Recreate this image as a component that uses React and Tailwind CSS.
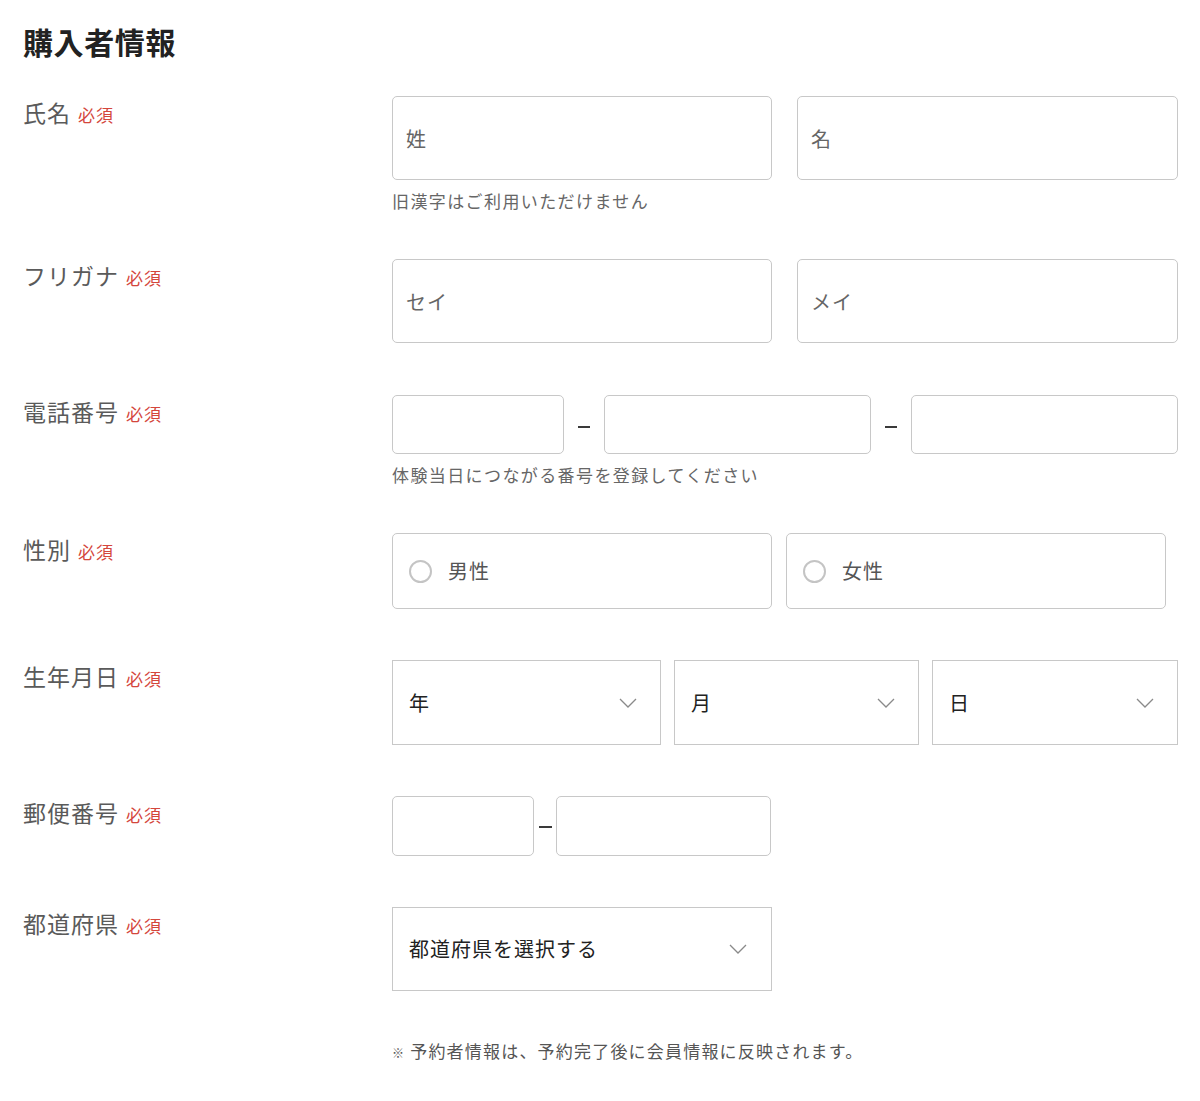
import React from "react";

function Required() {
  return (
    <span className="ml-[7px] text-[17px] tracking-[1px] text-[#d4463c]">必須</span>
  );
}

function Label({ children }) {
  return (
    <div className="w-[369px] shrink-0 leading-[32px]">
      <span className="text-[23px] tracking-[1px] text-[#5a5a5a]">{children}</span>
      <Required />
    </div>
  );
}

function TextInput({ placeholder, className }) {
  return (
    <input
      type="text"
      placeholder={placeholder}
      className={
        "border border-[#c8c8c8] rounded-[5px] px-[13px] text-[20px] tracking-[1px] text-[#333] placeholder:text-[#666] outline-none bg-white " +
        className
      }
    />
  );
}

function Chevron() {
  return (
    <svg width="18" height="10" viewBox="0 0 18 10" fill="none" className="shrink-0">
      <path d="M1 1l8 8 8-8" stroke="#8a8a8a" strokeWidth="1.3" />
    </svg>
  );
}

function SelectBox({ label, className }) {
  return (
    <div
      className={
        "flex items-center justify-between border border-[#c8c8c8] bg-white pl-[16px] pr-[23px] text-[20px] tracking-[1px] text-[#222] " +
        className
      }
    >
      <span>{label}</span>
      <Chevron />
    </div>
  );
}

function Radio({ label }) {
  return (
    <div className="flex items-center w-[380px] h-[76px] border border-[#c8c8c8] rounded-[5px] pl-[16px]">
      <span className="w-[23px] h-[23px] rounded-full border-2 border-[#c4c4c4]" />
      <span className="ml-[16px] text-[20px] tracking-[1px] text-[#555]">{label}</span>
    </div>
  );
}

function Dash({ className }) {
  return <div className={"h-[2px] bg-[#3a3a3a] " + className} />;
}

function Help({ children }) {
  return (
    <p className="mt-[8px] text-[17px] tracking-[1.4px] leading-[26px] text-[#666]">{children}</p>
  );
}

export default function App() {
  return (
    <div className="min-h-screen bg-white pl-[23px] pr-[22px] pt-[19px] pb-[40px] font-['Noto_Sans_CJK_JP','Noto_Sans',sans-serif]">
      <h1 className="text-[30px] leading-[45px] font-bold tracking-[0.6px] text-[#222]">購入者情報</h1>

      {/* 氏名 */}
      <div className="flex mt-[32px]">
        <Label>氏名</Label>
        <div className="flex-1">
          <div className="flex gap-[25px]">
            <TextInput placeholder="姓" className="w-[380px] h-[84px]" />
            <TextInput placeholder="名" className="w-[381px] h-[84px]" />
          </div>
          <Help>旧漢字はご利用いただけません</Help>
        </div>
      </div>

      {/* フリガナ */}
      <div className="flex mt-[45px]">
        <Label>フリガナ</Label>
        <div className="flex gap-[25px]">
          <TextInput placeholder="セイ" className="w-[380px] h-[84px]" />
          <TextInput placeholder="メイ" className="w-[381px] h-[84px]" />
        </div>
      </div>

      {/* 電話番号 */}
      <div className="flex mt-[52px]">
        <Label>電話番号</Label>
        <div className="flex-1">
          <div className="flex items-center">
            <TextInput className="w-[172px] h-[59px]" />
            <div className="w-[40px] flex justify-center pt-[4px]">
              <Dash className="w-[12px]" />
            </div>
            <TextInput className="w-[267px] h-[59px]" />
            <div className="w-[40px] flex justify-center pt-[4px]">
              <Dash className="w-[12px]" />
            </div>
            <TextInput className="w-[267px] h-[59px]" />
          </div>
          <Help>体験当日につながる番号を登録してください</Help>
        </div>
      </div>

      {/* 性別 */}
      <div className="flex mt-[45px]">
        <Label>性別</Label>
        <div className="flex gap-[14px]">
          <Radio label="男性" />
          <Radio label="女性" />
        </div>
      </div>

      {/* 生年月日 */}
      <div className="flex mt-[51px]">
        <Label>生年月日</Label>
        <div className="flex gap-[13px]">
          <SelectBox label="年" className="w-[269px] h-[85px]" />
          <SelectBox label="月" className="w-[245px] h-[85px]" />
          <SelectBox label="日" className="w-[246px] h-[85px]" />
        </div>
      </div>

      {/* 郵便番号 */}
      <div className="flex mt-[51px]">
        <Label>郵便番号</Label>
        <div className="flex items-center">
          <TextInput className="w-[142px] h-[60px]" />
          <div className="w-[22px] flex justify-center pt-[2px]">
            <Dash className="w-[13px]" />
          </div>
          <TextInput className="w-[215px] h-[60px]" />
        </div>
      </div>

      {/* 都道府県 */}
      <div className="flex mt-[51px]">
        <Label>都道府県</Label>
        <SelectBox label="都道府県を選択する" className="w-[380px] h-[84px] !pr-[24px]" />
      </div>

      <p className="ml-[369px] mt-[47px] text-[17px] tracking-[1.2px] leading-[26px] text-[#555]">
        <span className="text-[12px] font-bold">※</span> 予約者情報は、予約完了後に会員情報に反映されます。
      </p>
    </div>
  );
}
